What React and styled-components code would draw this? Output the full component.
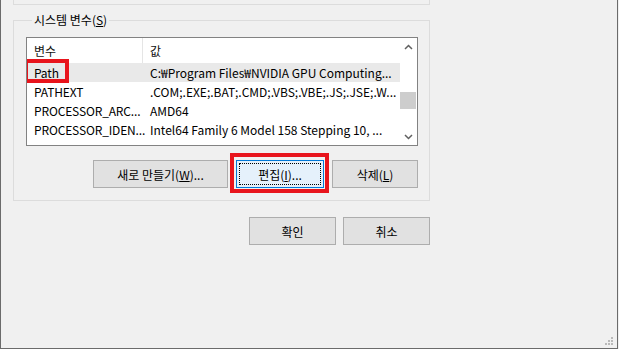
import styled, { createGlobalStyle } from 'styled-components'

const GlobalStyle = createGlobalStyle`
  html, body {
    margin: 0;
    padding: 0;
    background: #f0f0f0;
  }
  body {
    font-family: "Noto Sans CJK KR", "Noto Sans", sans-serif;
    font-size: 12px;
    color: #000;
  }
`

const Window = styled.div`
  position: relative;
  box-sizing: border-box;
  width: 618px;
  height: 349px;
  padding-left: 12px;
  border-left: 1px solid #6b6b6b;
  border-right: 1px solid #6b6b6b;
  border-bottom: 1px solid #6b6b6b;
  display: flex;
  flex-direction: column;
`

const GroupTail = styled.div`
  box-sizing: border-box;
  width: 417px;
  height: 5px;
  border: 1px solid #dcdcdc;
  border-top: none;
`

const GroupBox = styled.fieldset`
  box-sizing: border-box;
  width: 417px;
  margin: 7px 0 0;
  padding: 9px 11px 12px 12px;
  border: 1px solid #dcdcdc;
  min-width: 0;
`

const Legend = styled.legend`
  margin-left: 6px;
  padding: 0 2px;
  line-height: 16px;
`

const Key = styled.span`
  text-decoration: underline;
`

const ListView = styled.div`
  box-sizing: border-box;
  width: 392px;
  height: 109px;
  border: 1px solid #828282;
  background: #fff;
  display: flex;
`

const Table = styled.div`
  flex: 1;
  display: flex;
  flex-direction: column;
  overflow: hidden;
`

const HeaderRow = styled.div`
  display: grid;
  grid-template-columns: 116px 1fr;
  height: 25px;
  align-items: stretch;
`

const HeaderCell = styled.div`
  display: flex;
  align-items: center;
  padding-left: 7px;
  color: #111;
  border-right: ${(p) => (p.$divider ? '1px solid #e5e5e5' : 'none')};
`

const Row = styled.div`
  display: grid;
  grid-template-columns: 116px 1fr;
  height: 19px;
  line-height: 19px;
  background: ${(p) => (p.$selected ? '#e9e9e9' : 'transparent')};
`

const Cell = styled.div`
  position: relative;
  padding-left: 7px;
  white-space: nowrap;
  letter-spacing: ${(p) => (p.$tight ? '-0.15px' : '0')};
`

const Annotation = styled.span`
  position: absolute;
  box-sizing: border-box;
  border: 4px solid #e8141c;
  pointer-events: none;
`

const PathMark = styled(Annotation)`
  left: -3px;
  top: -4px;
  width: 45px;
  height: 24px;
`

const EditMark = styled(Annotation)`
  left: -7px;
  top: -8px;
  right: -6px;
  bottom: -6px;
`

const ScrollBar = styled.div`
  width: 17px;
  display: flex;
  flex-direction: column;
  background: #fff;
`

const ScrollArrow = styled.div`
  height: 17px;
  display: flex;
  align-items: center;
  justify-content: center;
`

const Track = styled.div`
  flex: 1;
  padding-top: 37px;
`

const Thumb = styled.div`
  margin: 0 1px 0 0;
  height: 17px;
  background: #cdcdcd;
`

const ButtonRow = styled.div`
  display: flex;
  justify-content: flex-end;
  gap: ${(p) => p.$gap}px;
  margin-top: ${(p) => p.$top}px;
  width: ${(p) => p.$width}px;
`

const Button = styled.div`
  position: relative;
  box-sizing: border-box;
  width: ${(p) => p.$w}px;
  height: 28px;
  display: flex;
  align-items: center;
  justify-content: center;
  background: ${(p) => (p.$focused ? '#e5f1fb' : '#e1e1e1')};
  border: 1px solid ${(p) => (p.$focused ? '#0078d7' : '#adadad')};
  color: #000;
  white-space: nowrap;

  &::after {
    content: '';
    display: ${(p) => (p.$focused ? 'block' : 'none')};
    position: absolute;
    inset: 2px;
    border: 1px dotted #000;
  }
`

const Grip = styled.svg`
  position: absolute;
  right: 3px;
  bottom: 2px;
`

function Chevron({ up }) {
  return (
    <svg width="9" height="6" viewBox="0 0 9 6">
      <path
        d={up ? 'M1 5 L4.5 1.5 L8 5' : 'M1 1 L4.5 4.5 L8 1'}
        fill="none"
        stroke="#606060"
        strokeWidth="1.5"
      />
    </svg>
  )
}

const rows = [
  { name: 'Path', value: 'C:₩Program Files₩NVIDIA GPU Computing...', selected: true },
  { name: 'PATHEXT', value: '.COM;.EXE;.BAT;.CMD;.VBS;.VBE;.JS;.JSE;.W...' },
  { name: 'PROCESSOR_ARC...', value: 'AMD64' },
  { name: 'PROCESSOR_IDEN...', value: 'Intel64 Family 6 Model 158 Stepping 10, ...' },
]

export default function App() {
  return (
    <>
      <GlobalStyle />
      <Window>
        <GroupTail />
        <GroupBox>
          <Legend>
            시스템 변수(<Key>S</Key>)
          </Legend>
          <ListView>
            <Table>
              <HeaderRow>
                <HeaderCell $divider>변수</HeaderCell>
                <HeaderCell>값</HeaderCell>
              </HeaderRow>
              {rows.map((r) => (
                <Row key={r.name} $selected={r.selected}>
                  <Cell $tight>
                    {r.name}
                    {r.selected && <PathMark />}
                  </Cell>
                  <Cell>{r.value}</Cell>
                </Row>
              ))}
            </Table>
            <ScrollBar>
              <ScrollArrow>
                <Chevron up />
              </ScrollArrow>
              <Track>
                <Thumb />
              </Track>
              <ScrollArrow>
                <Chevron />
              </ScrollArrow>
            </ScrollBar>
          </ListView>
          <ButtonRow $gap={8} $top={14} $width={392}>
            <Button $w={135}>
              새로 만들기(<Key>W</Key>)...
            </Button>
            <Button $w={88} $focused>
              편집(<Key>I</Key>)...
              <EditMark />
            </Button>
            <Button $w={86}>
              삭제(<Key>L</Key>)
            </Button>
          </ButtonRow>
        </GroupBox>
        <ButtonRow $gap={7} $top={16} $width={417}>
          <Button $w={87}>확인</Button>
          <Button $w={87}>취소</Button>
        </ButtonRow>
        <Grip width="12" height="12" viewBox="0 0 12 12">
          {[
            [9, 1],
            [6, 4],
            [9, 4],
            [3, 7],
            [6, 7],
            [9, 7],
          ].map(([x, y]) => (
            <rect key={`${x}-${y}`} x={x} y={y + 2} width="2" height="2" fill="#b9b9b9" />
          ))}
        </Grip>
      </Window>
    </>
  )
}
